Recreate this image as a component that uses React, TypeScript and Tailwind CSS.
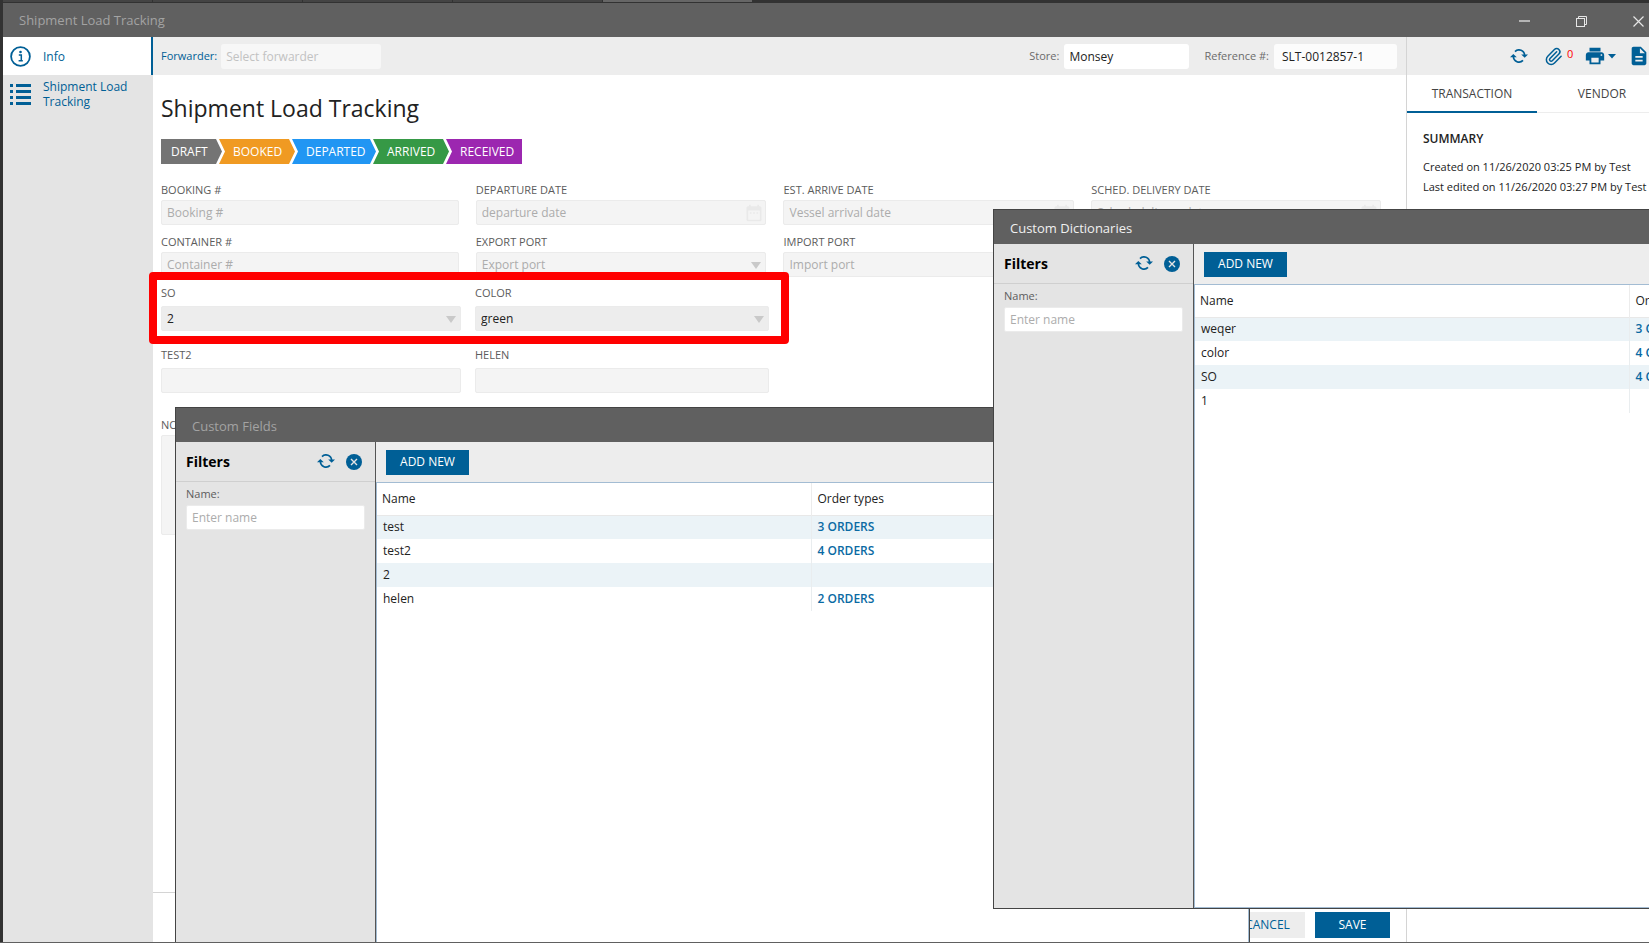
import React from "react";
import { MdPrint, MdDescription, MdDateRange } from "react-icons/md";
import { Paperclip } from "lucide-react";

interface Row {
  name: string;
  orders?: string;
}

const steps = [
  { label: "DRAFT", className: "w-[61px] pl-[10px] bg-[#747474] [clip-path:polygon(0_0,55px_0,100%_50%,55px_100%,0_100%)]" },
  { label: "BOOKED", className: "w-[76px] pl-[14px] -ml-[3px] bg-[#f09a22] [clip-path:polygon(0_0,70px_0,100%_50%,70px_100%,0_100%,6px_50%)]" },
  { label: "DEPARTED", className: "w-[84px] pl-[14px] -ml-[3px] bg-[#2196f3] [clip-path:polygon(0_0,78px_0,100%_50%,78px_100%,0_100%,6px_50%)]" },
  { label: "ARRIVED", className: "w-[76px] pl-[14px] -ml-[3px] bg-[#369946] [clip-path:polygon(0_0,70px_0,100%_50%,70px_100%,0_100%,6px_50%)]" },
  { label: "RECEIVED", className: "w-[76px] pl-[14px] -ml-[3px] bg-[#9c27b0] [clip-path:polygon(0_0,100%_0,100%_100%,0_100%,6px_50%)]" },
];

const fieldRows: Row[] = [
  { name: "test", orders: "3 ORDERS" },
  { name: "test2", orders: "4 ORDERS" },
  { name: "2" },
  { name: "helen", orders: "2 ORDERS" },
];

const dictionaryRows: Row[] = [
  { name: "weqer", orders: "3 ORDERS" },
  { name: "color", orders: "4 ORDERS" },
  { name: "SO", orders: "4 ORDERS" },
  { name: "1" },
];

const RefreshIcon = () => (
  <svg width="18" height="15" viewBox="0 0 18 15" fill="none">
    <path d="M5 2.6A5.6 5.6 0 0 1 14.6 6.4" stroke="#005f96" strokeWidth="1.7" />
    <path d="M3.4 7.6A5.6 5.6 0 0 0 13 11.4" stroke="#005f96" strokeWidth="1.7" />
    <path d="M0 8.2L3.3 5L6.8 8.2Z" fill="#005f96" />
    <path d="M11.2 5.6L14.7 8.8L18 5.6Z" fill="#005f96" />
  </svg>
);

const InfoIcon = () => (
  <svg width="21" height="21" viewBox="0 0 21 21" fill="none">
    <circle cx="10.5" cy="10.5" r="9.4" stroke="#005f96" strokeWidth="1.8" />
    <circle cx="10.5" cy="6" r="1.3" fill="#005f96" />
    <path d="M8.8 9H11.3V14.3M8.6 14.7H12.8" stroke="#005f96" strokeWidth="1.5" />
  </svg>
);

const ListIcon = () => (
  <svg width="21" height="21" viewBox="0 0 21 21" fill="#005f96">
    {[0, 6, 12, 18].map((y) => (
      <g key={y}>
        <rect x="0" y={y} width="3" height="3" />
        <rect x="6" y={y} width="15" height="3" />
      </g>
    ))}
  </svg>
);

interface FieldProps {
  id: string;
  label: string;
  placeholder?: string;
  value?: string;
  kind?: "text" | "date" | "select";
  tall?: boolean;
}

const Field: React.FC<FieldProps> = ({ id, label, placeholder, value, kind = "text", tall }) => {
  const box = "h-[25px] w-full rounded-[2px] border border-[#ebebeb] px-[5px] text-[12px] outline-none placeholder:text-[#acacac]";
  return (
    <div className={`flex min-w-0 flex-col ${tall ? "gap-[5px]" : "gap-[2px]"}`}>
      <label htmlFor={id} className="text-[11px] leading-4 whitespace-nowrap text-[#5c5c5c]">
        {label}
      </label>
      <div className="relative">
        {kind === "select" ? (
          <select
            id={id}
            defaultValue={value || placeholder}
            className={`${box} appearance-none ${value ? "bg-[#ededed] text-[#222]" : "bg-[#f4f4f4] text-[#acacac]"}`}
          >
            <option>{value || placeholder}</option>
          </select>
        ) : (
          <input id={id} type="text" defaultValue={value} placeholder={placeholder} className={`${box} bg-[#f4f4f4]`} />
        )}
        {kind === "select" && (
          <svg className="pointer-events-none absolute top-[10px] right-[5px]" width="10" height="7" viewBox="0 0 10 7">
            <path d="M0 0H10L5 7Z" fill="#c9c9c9" />
          </svg>
        )}
        {kind === "date" && (
          <MdDateRange className="pointer-events-none absolute top-[3px] right-[2px] text-[#e9e9e9]" size={20} />
        )}
      </div>
    </div>
  );
};

interface WindowProps {
  id: string;
  title: string;
  active?: boolean;
  rows: Row[];
  className: string;
}

const ListWindow: React.FC<WindowProps> = ({ id, title, active, rows, className }) => (
  <section className={`absolute flex h-[700px] w-[1075px] flex-col border border-[#444] bg-white ${className}`}>
    <header className={`flex h-[34px] shrink-0 items-center bg-[#606060] pt-1 pl-4 text-[13px] ${active ? "text-[#f0f0f0]" : "text-[#a3a3a3]"}`}>
      {title}
    </header>
    <div className="flex min-h-0 flex-1">
      <aside className="w-[200px] shrink-0 border-r border-[#555] bg-[#e4e4e4]">
        <div className="flex h-10 items-center border-b border-[#cfcfcf] pr-[13px] pl-[10px]">
          <h2 className="flex-1 text-[14px] font-bold text-black">Filters</h2>
          <button type="button" aria-label="Refresh" className="mr-[11px]">
            <RefreshIcon />
          </button>
          <button type="button" aria-label="Clear filters">
            <svg width="16" height="16" viewBox="0 0 16 16">
              <circle cx="8" cy="8" r="8" fill="#005f96" />
              <path d="M5 5L11 11M11 5L5 11" stroke="#e4e4e4" strokeWidth="1.4" />
            </svg>
          </button>
        </div>
        <div className="flex flex-col gap-[3px] px-[10px] pt-1">
          <label htmlFor={`${id}-name`} className="text-[11px] leading-4 text-[#5c5c5c]">
            Name:
          </label>
          <input
            id={`${id}-name`}
            type="text"
            placeholder="Enter name"
            className="h-[25px] w-full rounded-[2px] border border-[#ebebeb] bg-white px-[5px] text-[12px] outline-none placeholder:text-[#acacac]"
          />
        </div>
      </aside>
      <div className="flex min-w-0 flex-1 flex-col">
        <div className="flex h-10 shrink-0 items-center bg-[#ededed] pl-[10px]">
          <button type="button" className="h-[25px] w-[83px] bg-[#005f96] text-[12px] text-white">
            ADD NEW
          </button>
        </div>
        <div className="flex-1 border border-[#a3bcd3]">
          <table className="w-full table-fixed border-collapse text-left text-[12px] text-[#222]">
            <thead>
              <tr className="h-8 border-b border-[#e8e8e8]">
                <th className="w-[434px] border-r border-[#ececec] pl-[5px] font-normal">Name</th>
                <th className="pl-[6px] font-normal">Order types</th>
              </tr>
            </thead>
            <tbody>
              {rows.map((row) => (
                <tr key={row.name} className="h-6 odd:bg-[#ebf3f7]">
                  <td className="border-r border-[#e9edef] pl-[6px]">{row.name}</td>
                  <td className="pl-[6px] font-semibold text-[#0a6aa3]">
                    {row.orders && <a href="#orders">{row.orders}</a>}
                  </td>
                </tr>
              ))}
            </tbody>
          </table>
        </div>
      </div>
    </div>
  </section>
);

const rowGrid = "grid grid-cols-[298fr_291fr_291fr_290fr] gap-[17px]";
const customGrid = "grid grid-cols-[300fr_294fr_293fr_291fr] gap-[14px]";

const App: React.FC = () => {
  return (
    <div className="relative flex h-screen flex-col overflow-hidden border-b border-[#606060] bg-[#323232] pl-[3px] font-['Open_Sans',sans-serif] text-[12px] text-[#222]">
      <div className="flex h-[3px] shrink-0 gap-px pb-px">
        <div className="w-[149px] bg-[#444]" />
        <div className="w-[149px] bg-[#444]" />
        <div className="w-[149px] bg-[#444]" />
        <div className="w-[149px] bg-[#444]" />
        <div className="w-[149px] bg-[#666]" />
      </div>

      <header className="flex h-[34px] shrink-0 items-center bg-[#606060] pt-[2px] pl-4 text-[13px] text-[#a3a3a3]">
        <h1 className="flex-1">Shipment Load Tracking</h1>
        <button type="button" aria-label="Minimize" className="mr-[46px]">
          <svg width="11" height="11" viewBox="0 0 11 11">
            <path d="M0 5H11" stroke="#b5b5b5" strokeWidth="2" />
          </svg>
        </button>
        <button type="button" aria-label="Restore" className="mr-[46px]">
          <svg width="11" height="11" viewBox="0 0 11 11" fill="none" stroke="#e6e6e6">
            <rect x="0.5" y="2.5" width="8" height="8" />
            <path d="M2.5 2.5V0.5H10.5V8.5H8.5" />
          </svg>
        </button>
        <button type="button" aria-label="Close" className="mr-[5px]">
          <svg width="11" height="11" viewBox="0 0 11 11">
            <path d="M0.5 0.5L10.5 10.5M10.5 0.5L0.5 10.5" stroke="#e6e6e6" strokeWidth="1.2" />
          </svg>
        </button>
      </header>

      <div className="flex min-h-0 flex-1 bg-white">
        <nav className="w-[150px] shrink-0 bg-[#e4e4e4] font-medium text-[#005f96]">
          <a href="#info" className="flex h-[38px] items-center gap-[12px] border-r-2 border-[#005f96] bg-white pl-[7px]">
            <InfoIcon />
            <span className="pt-[2px]">Info</span>
          </a>
          <a href="#tracking" className="flex items-center gap-[12px] pt-1 pl-[7px] leading-[15px]">
            <ListIcon />
            <span className="w-24">Shipment Load Tracking</span>
          </a>
        </nav>

        <main className="flex min-w-0 flex-1 flex-col">
          <div className="flex h-[38px] shrink-0 items-center bg-[#ededed] pr-[9px] pl-2 text-[11px]">
            <label htmlFor="forwarder" className="mr-1 font-medium text-[#005f96]">
              Forwarder:
            </label>
            <input
              id="forwarder"
              type="text"
              placeholder="Select forwarder"
              className="h-[25px] w-[160px] rounded-[3px] bg-[#f7f7f7] px-[5px] text-[12px] outline-none placeholder:text-[#c2c2c2]"
            />
            <div className="flex-1" />
            <label htmlFor="store" className="mr-[5px] text-[#6b6b6b]">
              Store:
            </label>
            <input
              id="store"
              type="text"
              defaultValue="Monsey"
              className="mr-[15px] h-[25px] w-[125px] rounded-[3px] bg-white px-[5px] text-[12px] outline-none"
            />
            <label htmlFor="reference" className="mr-[5px] text-[#6b6b6b]">
              Reference #:
            </label>
            <input
              id="reference"
              type="text"
              defaultValue="SLT-0012857-1"
              className="h-[25px] w-[123px] rounded-[3px] bg-[#fcfcfc] px-2 text-[12px] outline-none"
            />
          </div>

          <div className="flex-1 pr-[25px] pl-2">
            <h2 className="mt-[17px] mb-[15px] text-[23px] leading-8">Shipment Load Tracking</h2>
            <div className="mb-[18px] flex h-[25px]">
              {steps.map((step) => (
                <div key={step.label} className={`flex shrink-0 items-center text-[12px] text-white ${step.className}`}>
                  {step.label}
                </div>
              ))}
            </div>

            <div className={`mb-[9px] ${rowGrid}`}>
              <Field id="booking" label="BOOKING #" placeholder="Booking #" />
              <Field id="departure" label="DEPARTURE DATE" placeholder="departure date" kind="date" />
              <Field id="arrive" label="EST. ARRIVE DATE" placeholder="Vessel arrival date" kind="date" />
              <Field id="delivery" label="SCHED. DELIVERY DATE" placeholder="Sched. delivery date" kind="date" />
            </div>
            <div className={`mb-2 ${rowGrid}`}>
              <Field id="container" label="CONTAINER #" placeholder="Container #" />
              <Field id="export" label="EXPORT PORT" placeholder="Export port" kind="select" />
              <Field id="import" label="IMPORT PORT" placeholder="Import port" kind="select" />
            </div>
            <div className={`relative mb-4 ${customGrid}`}>
              <Field id="so" label="SO" value="2" kind="select" tall />
              <Field id="color" label="COLOR" value="green" kind="select" tall />
              <div className="pointer-events-none absolute -top-[13px] -left-[12px] h-[72px] w-[640px] rounded-[4px] border-8 border-[#ff0000]" />
            </div>
            <div className={`mb-6 ${customGrid}`}>
              <Field id="test2" label="TEST2" tall />
              <Field id="helen" label="HELEN" tall />
            </div>
            <div className="flex flex-col gap-[2px]">
              <label htmlFor="notes" className="text-[11px] leading-4 text-[#5c5c5c]">
                NOTES
              </label>
              <textarea id="notes" className="h-[100px] w-full resize-none rounded-[2px] border border-[#ebebeb] bg-[#f4f4f4]" />
            </div>
          </div>

          <footer className="flex h-[50px] shrink-0 justify-end gap-[10px] border-t border-[#d4d4d4] pt-[19px] pr-4">
            <button type="button" className="h-[26px] w-[75px] bg-[#ededed] text-[12px] text-[#005f96]">
              CANCEL
            </button>
            <button type="button" className="h-[26px] w-[75px] bg-[#005f96] text-[12px] text-white">
              SAVE
            </button>
          </footer>
        </main>

        <aside className="w-[243px] shrink-0 overflow-hidden border-l border-[#d4d4d4]">
          <div className="flex h-[38px] items-center bg-[#ededed] pl-[103px] text-[#005f96]">
            <button type="button" aria-label="Refresh" className="mr-4 shrink-0">
              <RefreshIcon />
            </button>
            <button type="button" aria-label="Attachments" className="mr-[11px] flex shrink-0 items-center gap-1">
              <Paperclip size={19} strokeWidth={1.9} />
              <span className="pb-1 text-[11px] text-[#ff0000]">0</span>
            </button>
            <button type="button" aria-label="Print" className="mr-3 flex shrink-0 items-center gap-[2px]">
              <MdPrint size={22} />
              <svg width="8" height="5" viewBox="0 0 8 5">
                <path d="M0 0H8L4 4.5Z" fill="#005f96" />
              </svg>
            </button>
            <button type="button" aria-label="Documents" className="shrink-0">
              <MdDescription size={22} />
            </button>
          </div>
          <div className="flex h-[38px] text-[12px] text-[#444]">
            <button type="button" className="w-[130px] shrink-0 border-b-2 border-[#005f96] pt-[2px]">
              TRANSACTION
            </button>
            <button type="button" className="w-[130px] shrink-0 border-b border-[#ededed]">
              VENDOR
            </button>
          </div>
          <div className="pt-4 pl-4 leading-5 whitespace-nowrap">
            <h3 className="mb-2 text-[12px] font-semibold">SUMMARY</h3>
            <p className="text-[11px]">Created on 11/26/2020 03:25 PM by Test</p>
            <p className="text-[11px]">Last edited on 11/26/2020 03:27 PM by Test</p>
          </div>
        </aside>
      </div>

      <ListWindow id="fields" title="Custom Fields" rows={fieldRows} className="top-[407px] left-[175px]" />
      <ListWindow id="dictionaries" title="Custom Dictionaries" active rows={dictionaryRows} className="top-[209px] left-[993px]" />
    </div>
  );
};

export default App;
